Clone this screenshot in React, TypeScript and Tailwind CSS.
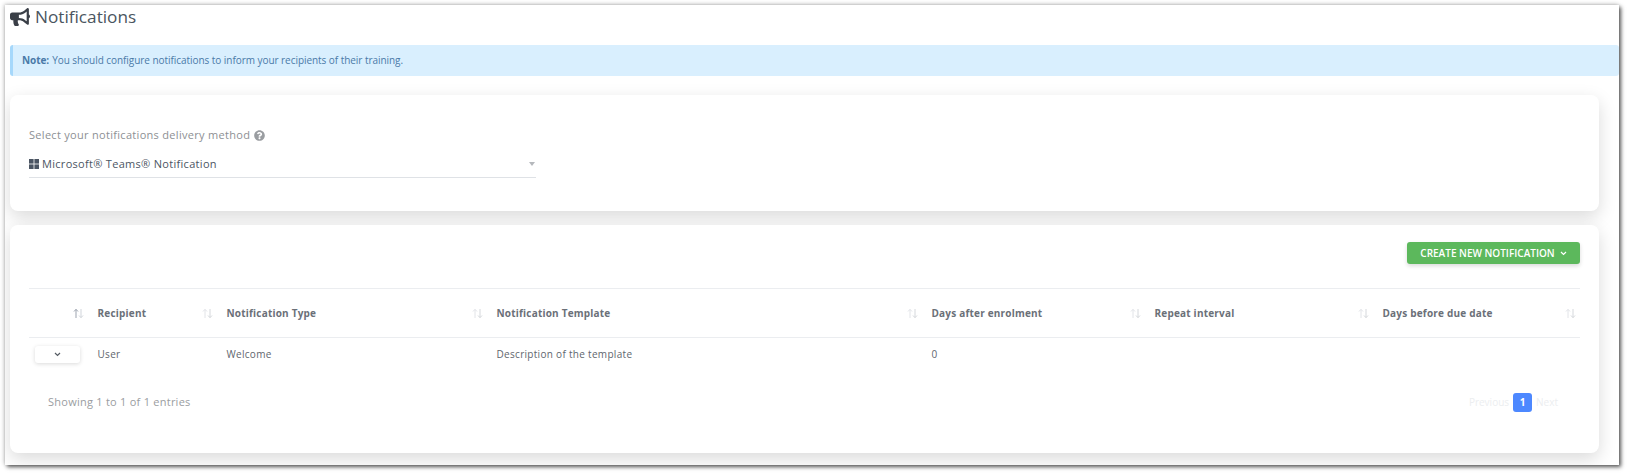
import React from 'react';
import { FaBullhorn, FaQuestionCircle } from 'react-icons/fa';

const SortIcon = ({ active = false }: { active?: boolean }) => (
  <svg width="11" height="11" viewBox="0 0 11 11" className="shrink-0" fill="none" strokeWidth="1">
    <path d="M3 10V1.5M1 3.5l2-2.2 2 2.2" stroke={active ? '#9ca3af' : '#e2e4e8'} />
    <path d="M8 1v8.5M6 7.5l2 2.2 2-2.2" stroke={active ? '#d1d5db' : '#d5d8dc'} />
  </svg>
);

const SmallChevron = ({ color }: { color: string }) => (
  <svg width="7" height="5" viewBox="0 0 7 5" fill="none" stroke={color} strokeWidth="1.2">
    <path d="M1 1l2.5 2.5L6 1" />
  </svg>
);

const WindowsIcon = () => (
  <svg width="10" height="10" viewBox="0 0 10 10" fill="#4b5563" className="mr-[3px] shrink-0">
    <rect x="0" y="0" width="4.6" height="4.6" />
    <rect x="5.4" y="0" width="4.6" height="4.6" />
    <rect x="0" y="5.4" width="4.6" height="4.6" />
    <rect x="5.4" y="5.4" width="4.6" height="4.6" />
  </svg>
);

const columns = [
  { label: 'Recipient', width: 'w-[129px]' },
  { label: 'Notification Type', width: 'w-[270px]' },
  { label: 'Notification Template', width: 'w-[435px]' },
  { label: 'Days after enrolment', width: 'w-[223px]' },
  { label: 'Repeat interval', width: 'w-[228px]' },
  { label: 'Days before due date', width: 'w-[207px]' },
];

const row = ['User', 'Welcome', 'Description of the template', '0', '', ''];

export default function App() {
  return (
    <div className="h-[474px] bg-white pt-[5px] pl-[5px] pr-[9px] font-['Open_Sans',sans-serif]">
      <div className="h-[460px] bg-white shadow-[2px_2px_4px_rgba(0,0,0,0.65),-1px_-1px_4px_rgba(0,0,0,0.2)] overflow-hidden">
        {/* Title */}
        <div className="h-[40px] pl-[5px] flex items-start">
          <FaBullhorn className="text-[20px] text-[#3a3f47] mt-[2px] mr-[5px]" />
          <h1 className="text-[17.2px] leading-[24px] text-[#4a5560]">Notifications</h1>
        </div>

        {/* Note */}
        <div className="ml-[5px] h-[31px] rounded-[3px] bg-[#d9effe] border-l-[3px] border-[#a6d8fb] pl-[9px] flex items-center text-[10px] tracking-[-0.05px] text-[#4a7aa8]">
          <span className="font-bold mr-[3px]">Note:</span> You should configure notifications to inform your recipients of their training.
        </div>

        {/* Delivery method */}
        <div className="mt-[19px] ml-[5px] mr-[20px] h-[116px] rounded-[8px] bg-white shadow-[0_6px_18px_rgba(0,0,0,0.15)] px-[19px] pt-[33px]">
          <label className="flex items-center gap-[4px] text-[11px] leading-[14px] text-[#8d9094] tracking-[0.3px]">
            Select your notifications delivery method
            <FaQuestionCircle className="text-[11px] text-[#9a9da1]" />
          </label>
          <div className="mt-[13px] w-[507px] h-[23px] border-b border-[#dfe2e6] flex items-center pb-[4px] text-[11px] text-[#4b5563] tracking-[0.3px]">
            <WindowsIcon />
            Microsoft® Teams® Notification
            <span className="ml-auto mr-[1px] w-0 h-0 border-x-[3px] border-x-transparent border-t-[4px] border-t-[#b5b8bc]" />
          </div>
        </div>

        {/* Notifications table */}
        <div className="mt-[14px] ml-[5px] mr-[20px] h-[228px] rounded-[8px] bg-white shadow-[0_6px_18px_rgba(0,0,0,0.15)] px-[19px] pt-[17px]">
          <div className="flex justify-end h-[47px] border-b border-[#ebedf0]">
            <button className="h-[22px] w-[173px] rounded-[3px] bg-[#5cb85c] shadow-[0_2px_4px_rgba(0,0,0,0.15)] text-white text-[10px] font-semibold flex items-center justify-center gap-[5px]">
              CREATE NEW NOTIFICATION
              <SmallChevron color="#ffffff" />
            </button>
          </div>
          <table className="w-full table-fixed border-collapse text-[10px]">
            <thead>
              <tr className="h-[48px] border-b border-[#ebedf0]">
                <th className="w-[59px] pr-[4px] pt-[2px]">
                  <div className="flex justify-end">
                    <SortIcon active />
                  </div>
                </th>
                {columns.map((col) => (
                  <th key={col.label} className={`${col.width} pl-[9.5px] pr-[4px] pt-[2px] font-bold text-[#6b7078] text-left`}>
                    <div className="flex items-center justify-between tracking-[0.2px]">
                      {col.label}
                      <SortIcon />
                    </div>
                  </th>
                ))}
              </tr>
            </thead>
            <tbody>
              <tr className="h-[33px]">
                <td className="pl-[6px] pt-[2px]">
                  <button className="w-[45px] h-[17px] rounded-[3px] bg-white shadow-[0_1px_4px_rgba(0,0,0,0.15)] flex items-center justify-center">
                    <SmallChevron color="#555b63" />
                  </button>
                </td>
                {row.map((cell, i) => (
                  <td key={i} className="pl-[9.5px] pt-[2px] text-[#60666e] tracking-[0.3px]">{cell}</td>
                ))}
              </tr>
            </tbody>
          </table>
          <div className="mt-[23px] pl-[19px] pr-[22px] flex items-center justify-between">
            <span className="text-[11px] text-[#9a9da1] tracking-[0.25px]">Showing 1 to 1 of 1 entries</span>
            <div className="flex items-center text-[10px] text-[#eceef0] gap-[4px]">
              <span>Previous</span>
              <span className="w-[19px] h-[19px] rounded-[3px] bg-[#4d88ff] text-white font-bold flex items-center justify-center">1</span>
              <span>Next</span>
            </div>
          </div>
        </div>
      </div>
    </div>
  );
}
